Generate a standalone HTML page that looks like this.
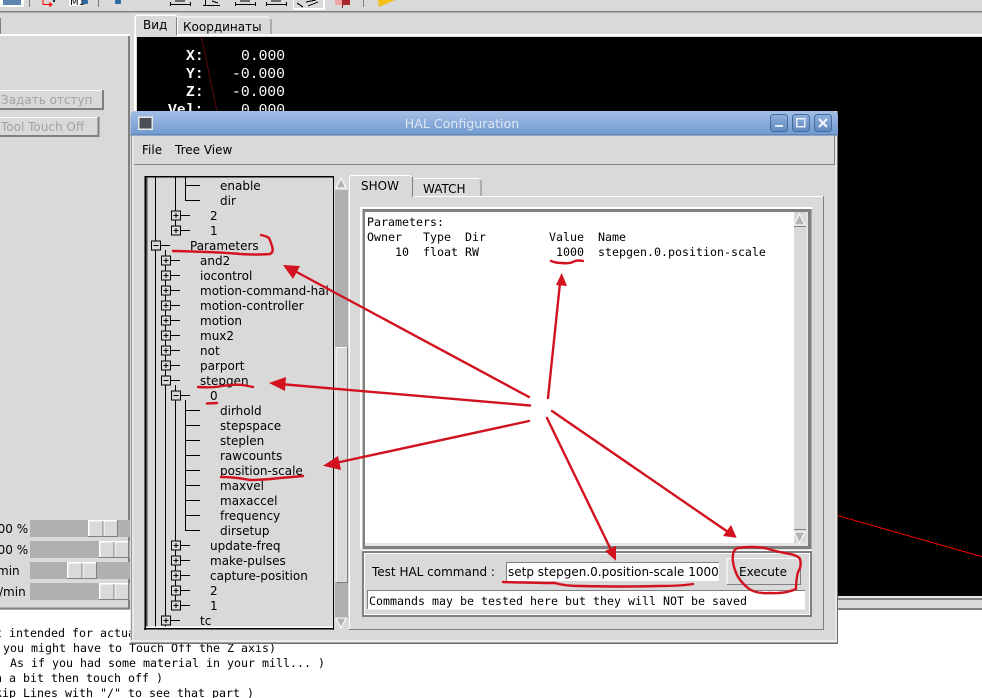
<!DOCTYPE html>
<html><head><meta charset="utf-8"><style>
html,body{margin:0;padding:0;width:982px;height:698px;overflow:hidden;background:#fff}
svg{display:block}
text{white-space:pre}
.u{font-family:"DejaVu Sans","Liberation Sans",sans-serif;font-size:12px;fill:#000}
.m{font-family:"DejaVu Sans Mono","Liberation Mono",monospace;font-size:11.63px;fill:#000}
.d{font-family:"Liberation Mono",monospace;font-size:14.7px;fill:#fff}
.r{fill:none;stroke:#d2121f;stroke-width:2.4;stroke-linecap:round;stroke-linejoin:round}
.h{fill:#d2121f}
.t{stroke:#000;stroke-width:1;fill:none}
</style></head><body>
<svg width="982" height="698" viewBox="0 0 982 698" xmlns="http://www.w3.org/2000/svg" shape-rendering="crispEdges">
<defs>
<g id="p"><rect x="-4.5" y="-4.5" width="9" height="9" fill="#d9d9d9" stroke="#000"/><path d="M-2.5 0H2.5M0 -2.5V2.5" stroke="#000"/></g>
<g id="n"><rect x="-4.5" y="-4.5" width="9" height="9" fill="#d9d9d9" stroke="#000"/><path d="M-2.5 0H2.5" stroke="#000"/></g>
<g id="th"><rect width="30" height="17" fill="#d9d9d9"/><rect width="1.500" height="17" fill="#fff"/><rect width="30" height="1.500" fill="#fff"/><rect x="29" width="1" height="17" fill="#808080"/><rect y="16" width="30" height="1" fill="#808080"/><rect x="14.500" y="1" width="1" height="16" fill="#808080"/><rect x="15.500" y="1" width="1" height="15" fill="#fff"/></g>
</defs>
<!-- app background -->
<rect width="982" height="610" fill="#d9d9d9"/>
<rect y="11" width="982" height="1.4" fill="#808080"/>
<!-- toolbar remnants -->
<rect x="0" y="0" width="24" height="7" fill="#fff"/><rect x="3" y="0" width="18" height="5" fill="#5e86b0"/>
<rect x="29" y="0" width="1" height="7" fill="#808080"/><rect x="98" y="0" width="1" height="7" fill="#808080"/>
<path d="M43 0V4.500H51M49 2.500L52 4.500L49 6.500" stroke="#f00" fill="none"/><rect x="53" y="0" width="2" height="2" fill="#222"/>
<rect x="69" y="0" width="15" height="6" fill="#fff"/><text x="70" y="5" class="u" style="font-size:10px">M1</text><rect x="82" y="0" width="6" height="4" rx="1.500" fill="#2a6a9e"/><rect x="115" y="0" width="6" height="4" rx="1.500" fill="#2a6a9e"/>
<path d="M170.500 2V6M190.500 2V6M170 4.500H190M175 1H185" stroke="#000" fill="none"/>
<path d="M203 5.500H220M205.500 0V5M212 1L218 3" stroke="#000" fill="none"/>
<path d="M235.500 2V6M255.500 2V6M235 4.500H255M240 1H250" stroke="#000" fill="none"/>
<path d="M266.500 2V6M286.500 2V6M266 4.500H286M271 1H281" stroke="#000" fill="none"/>
<rect x="293" y="0" width="32" height="10" fill="#fff"/><rect x="294" y="0" width="29" height="8" fill="#d9d9d9"/><path d="M297 3L303 7M308 6L318 2M306 2L316 0" stroke="#000" fill="none"/>
<rect x="335" y="0" width="15" height="5" fill="#a82a2e"/><rect x="335" y="0" width="7" height="5" fill="#eda6a0"/><rect x="342" y="5" width="1" height="3" fill="#7a1a1a"/>
<rect x="363" y="0" width="1" height="7" fill="#808080"/>
<path d="M378 0H395L386 4L379 7Z" fill="#f2c11a"/>
<!-- left panel -->
<rect y="18" width="1" height="16" fill="#808080"/>
<rect y="34" width="130" height="2" fill="#fff"/>
<rect x="128" y="36" width="2" height="573" fill="#808080"/>
<rect y="607.500" width="130" height="2" fill="#808080"/>
<rect x="-2" y="90" width="106" height="19" fill="#d9d9d9"/><path d="M0 90.500H103" stroke="#fff"/><path d="M103 90V109H0" stroke="#808080" fill="none" stroke-width="2"/>
<text x="1" y="104" class="u" style="fill:#a3a3a3">Задать отступ</text>
<rect x="-2" y="117" width="101" height="19" fill="#d9d9d9"/><path d="M0 117.500H98" stroke="#fff"/><path d="M98.500 117V136H0" stroke="#808080" fill="none" stroke-width="2"/>
<text x="1" y="131" class="u" style="fill:#a3a3a3">Tool Touch Off</text>
<text x="-10" y="533" class="u">100 %</text><text x="-10" y="554" class="u">100 %</text><text x="-3" y="575" class="u">min</text><text x="-1" y="596" class="u">/min</text>
<rect x="30" y="520" width="100" height="17" fill="#b0b0b0"/><rect x="30" y="541" width="100" height="17" fill="#b0b0b0"/><rect x="30" y="562" width="100" height="17" fill="#b0b0b0"/><rect x="30" y="583" width="100" height="17" fill="#b0b0b0"/>
<use href="#th" x="88" y="520"/><use href="#th" x="99" y="541"/><use href="#th" x="67" y="562"/><use href="#th" x="99" y="583"/>
<!-- tabs -->
<path d="M135 34V17L137 15H175L177 17V34" fill="#d9d9d9" stroke="#fff" stroke-width="1.500"/><path d="M176.500 17V35" stroke="#808080"/>
<path d="M178 34V17H269L271 19V34" fill="#d9d9d9"/><path d="M178 17H269" stroke="#fff"/><path d="M271 19V34" stroke="#808080"/>
<text x="143" y="29" class="u">Вид</text><text x="183" y="31" class="u">Координаты</text>
<rect x="177" y="34" width="805" height="2" fill="#fff"/><rect x="134" y="34" width="2" height="580" fill="#fff"/>
<!-- canvas -->
<rect x="137" y="37" width="845" height="559" fill="#000"/>
<path d="M201.500 37L217 112" stroke="#5a0808" fill="none" shape-rendering="geometricPrecision"/>
<path d="M838 515.700L982 556.700" stroke="#f00" fill="none" shape-rendering="geometricPrecision"/>
<text x="186" y="60" class="d" style="font-weight:bold">X:</text><text x="186" y="78" class="d" style="font-weight:bold">Y:</text><text x="186" y="96" class="d" style="font-weight:bold">Z:</text><text x="168" y="114" class="d" style="font-weight:bold">Vel:</text>
<text x="241" y="60" class="d">0.000</text><text x="232" y="78" class="d">-0.000</text><text x="232" y="96" class="d">-0.000</text><text x="241" y="114" class="d">0.000</text>
<rect x="838" y="596" width="144" height="2" fill="#e6e6e6"/><rect x="838" y="598" width="144" height="2" fill="#808080"/><rect x="838" y="600" width="144" height="8" fill="#d9d9d9"/><rect x="838" y="608" width="144" height="2" fill="#808080"/>
<!-- bottom text -->
<rect y="610" width="982" height="88" fill="#fff"/>
<text x="-5" y="637" class="m">t intended for actual</text>
<text x="3" y="652" class="m">you might have to Touch Off the Z axis)</text>
<text x="10" y="667" class="m">As if you had some material in your mill... )</text>
<text x="-5" y="682" class="m">n a bit then touch off )</text>
<text x="-5" y="697" class="m">kip Lines with "/" to see that part )</text>
<!-- window -->
<rect x="130.500" y="111" width="707" height="532.500" fill="#d9d9d9"/>
<rect x="131" y="135" width="1" height="508" fill="#9a9a9a"/><rect x="132" y="135" width="2" height="508" fill="#e6e6e6"/>
<rect x="835" y="135" width="2" height="508" fill="#e6e6e6"/><rect x="837" y="135" width="1" height="509" fill="#6e6e6e"/>
<rect x="131" y="640" width="706" height="2" fill="#ececec"/><rect x="130.500" y="642.500" width="707.500" height="1.500" fill="#6e6e6e"/>
<linearGradient id="tb" x1="0" y1="0" x2="0" y2="1"><stop offset="0" stop-color="#a3bfe6"/><stop offset="1" stop-color="#7099cf"/></linearGradient>
<linearGradient id="bb" x1="0" y1="0" x2="0" y2="1"><stop offset="0" stop-color="#8fb0dc"/><stop offset="1" stop-color="#5f89c2"/></linearGradient>
<path d="M130.500 135V116Q130.500 111 135.500 111H833Q838 111 838 116V135Z" fill="url(#tb)" shape-rendering="geometricPrecision"/>
<rect x="130.500" y="134.300" width="707.500" height="1" fill="#4f76ab"/>
<rect x="138.500" y="117" width="13.500" height="12" fill="#4a4f55" stroke="#e8e8e8" stroke-width="1.500"/>
<text x="462" y="128" class="u" text-anchor="middle" style="fill:#dfe7f2;font-size:12.6px">HAL Configuration</text>
<g shape-rendering="geometricPrecision">
<rect x="770.500" y="114.500" width="17" height="17" rx="3" fill="url(#bb)" stroke="#466b9e"/>
<rect x="792.500" y="114.500" width="17" height="17" rx="3" fill="url(#bb)" stroke="#466b9e"/>
<rect x="814.500" y="114.500" width="17" height="17" rx="3" fill="url(#bb)" stroke="#466b9e"/>
</g>
<rect x="775" y="125" width="8" height="2" fill="#e8eef8"/>
<rect x="796.500" y="118.500" width="8" height="8" fill="none" stroke="#e8eef8" stroke-width="1.500"/>
<path d="M819 119L827 127M827 119L819 127" stroke="#f0f4fa" stroke-width="2.200" shape-rendering="geometricPrecision"/>
<!-- menu -->
<path d="M134 164.500H834.500V135" stroke="#808080" fill="none"/>
<text x="142" y="154" class="u">File</text><text x="175" y="154" class="u">Tree View</text>
<!-- tree frame -->
<svg x="146" y="177" width="187" height="451" viewBox="146 177 187 451">
<rect x="146" y="177" width="187" height="451" fill="#d9d9d9"/>
<g class="t">
<path d="M155.500 177V628M175.500 177V230M185.500 177V200M185 185.500H200M185 200.500H200M175 215.500H190M175 230.500H190"/>
<path d="M155 245.500H170M165.500 250V628"/>
<path d="M165 260.500H180M165 275.500H180M165 290.500H180M165 305.500H180M165 320.500H180M165 335.500H180M165 350.500H180M165 365.500H180M165 380.500H180M165 620.500H180"/>
<path d="M175 395.500H190M175.500 385V605M185.500 400V530"/>
<path d="M185 410.500H200M185 425.500H200M185 440.500H200M185 455.500H200M185 470.500H200M185 485.500H200M185 500.500H200M185 515.500H200M185 530.500H200"/>
<path d="M175 545.500H190M175 560.500H190M175 575.500H190M175 590.500H190M175 605.500H190"/>
</g>
<use href="#p" x="176" y="215.500"/><use href="#p" x="176" y="230.500"/><use href="#n" x="156" y="245.500"/>
<use href="#p" x="166" y="260.500"/><use href="#p" x="166" y="275.500"/><use href="#p" x="166" y="290.500"/><use href="#p" x="166" y="305.500"/><use href="#p" x="166" y="320.500"/><use href="#p" x="166" y="335.500"/><use href="#p" x="166" y="350.500"/><use href="#p" x="166" y="365.500"/><use href="#n" x="166" y="380.500"/><use href="#n" x="176" y="395.500"/>
<use href="#p" x="176" y="545.500"/><use href="#p" x="176" y="560.500"/><use href="#p" x="176" y="575.500"/><use href="#p" x="176" y="590.500"/><use href="#p" x="176" y="605.500"/><use href="#p" x="166" y="620.500"/>
<g class="u">
<text x="220" y="190">enable</text><text x="220" y="205">dir</text><text x="210" y="220">2</text><text x="210" y="235">1</text>
<text x="190" y="250">Parameters</text><text x="200" y="265">and2</text><text x="200" y="280">iocontrol</text><text x="200" y="295">motion-command-hal</text><text x="200" y="310">motion-controller</text><text x="200" y="325">motion</text><text x="200" y="340">mux2</text><text x="200" y="355">not</text><text x="200" y="370">parport</text><text x="200" y="385">stepgen</text>
<text x="210" y="400">0</text>
<text x="220" y="415">dirhold</text><text x="220" y="430">stepspace</text><text x="220" y="445">steplen</text><text x="220" y="460">rawcounts</text><text x="220" y="475">position-scale</text><text x="220" y="490">maxvel</text><text x="220" y="505">maxaccel</text><text x="220" y="520">frequency</text><text x="220" y="535">dirsetup</text>
<text x="210" y="550">update-freq</text><text x="210" y="565">make-pulses</text><text x="210" y="580">capture-position</text><text x="210" y="595">2</text><text x="210" y="610">1</text>
<text x="200" y="625">tc</text>
</g>
</svg>
<path d="M145 630V176.500H333" stroke="#000" fill="none" stroke-width="1.500"/><rect x="146" y="177" width="1.500" height="451" fill="#444"/>
<rect x="333" y="176" width="1" height="454" fill="#000"/><rect x="144" y="628" width="190" height="1.500" fill="#000"/><rect x="146" y="626.500" width="187" height="1.500" fill="#fff"/>
<!-- tree scrollbar -->
<rect x="335" y="176" width="13" height="454" fill="#d9d9d9"/>
<rect x="335" y="190" width="13" height="428" fill="#b0b0b0"/>
<rect x="336" y="347.500" width="11" height="235" fill="#d9d9d9"/><path d="M336 582V347.500H347" stroke="#fff" fill="none"/><path d="M347.500 347V582.500H336" stroke="#808080" fill="none"/>
<path d="M341 178L346 188H336Z" fill="#b5b5b5" stroke="#fff" shape-rendering="geometricPrecision"/>
<path d="M341 628L346 618H336Z" fill="#b5b5b5" stroke="#fff" shape-rendering="geometricPrecision"/>
<!-- notebook -->
<path d="M349.500 630V196.500H824" stroke="#fff" fill="none"/><path d="M823.500 196V629.500H349" stroke="#808080" fill="none"/>
<path d="M349 196V177L351 175H410L412 177V197" fill="#d9d9d9"/><path d="M349.500 196V177L351 175.500H410L411.500 177" stroke="#fff" fill="none"/><path d="M412.500 177V197" stroke="#808080"/>
<path d="M413.500 196V178.500H479L481 180V196" fill="#d9d9d9"/><path d="M414 178.500H479" stroke="#fff"/><path d="M481 180V196" stroke="#808080"/>
<rect x="350" y="196" width="62" height="1.500" fill="#d9d9d9"/>
<text x="361" y="190" class="u">SHOW</text><text x="423" y="193" class="u">WATCH</text>
<!-- text frame -->
<rect x="360" y="207" width="452" height="2" fill="#fff"/><rect x="360" y="207" width="2.500" height="342" fill="#fff"/>
<rect x="362.500" y="209" width="449" height="340" fill="#808080"/>
<rect x="365" y="212" width="443" height="334" fill="#e4e4e4"/>
<rect x="365" y="212" width="428" height="331" fill="#fff"/>
<rect x="793" y="212" width="13" height="331" fill="#d9d9d9"/><path d="M793.500 212V543" stroke="#fff"/>
<path d="M799.500 214L805 225H794Z" fill="#b5b5b5" stroke="#fff" shape-rendering="geometricPrecision"/><path d="M794 226.500H806" stroke="#808080"/>
<path d="M794 529.500H806" stroke="#808080"/><path d="M799.500 543L805 532H794Z" fill="#b5b5b5" stroke="#fff" shape-rendering="geometricPrecision"/>
<g class="m"><text x="367" y="226">Parameters:</text>
<text x="367" y="241">Owner   Type  Dir         Value  Name</text>
<text x="367" y="256">    10  float RW           1000  stepgen.0.position-scale</text></g>
<!-- command section -->
<rect x="362" y="550" width="450" height="67" fill="#808080"/>
<rect x="362" y="550" width="450" height="1" fill="#fff"/>
<rect x="364" y="553" width="446" height="62" fill="#fff"/>
<rect x="365" y="554" width="444" height="60" fill="#d9d9d9"/>
<text x="372" y="576" class="u">Test HAL command :</text>
<rect x="506" y="562" width="213" height="19" fill="#fff"/><path d="M506.500 581V562.500H719" stroke="#808080" fill="none"/>
<svg x="507" y="563" width="212" height="18" viewBox="507 563 212 18"><text x="508" y="576" class="u">setp stepgen.0.position-scale 1000</text></svg>
<rect x="726.500" y="558.500" width="74" height="26" fill="#d9d9d9"/><path d="M727 584V558.500H800" stroke="#fff" fill="none"/><path d="M800.500 558V584.500H727" stroke="#808080" fill="none"/>
<text x="739" y="576" class="u">Execute</text>
<rect x="367" y="590.500" width="438" height="19" fill="#fff"/><path d="M367.500 609V590.500H805" stroke="#808080" fill="none"/>
<text x="369" y="605" class="m">Commands may be tested here but they will NOT be saved</text>
<!-- red annotations -->
<g shape-rendering="geometricPrecision">
<path class="r" d="M529 397L291 269"/><path class="h" d="M283 265L300 266L293 279Z"/>
<path class="r" d="M530 405.500L280 384"/><path class="h" d="M269 383L286 377L285 391Z"/>
<path class="r" d="M529 421L333 463.500"/><path class="h" d="M323 465.700L338 456L341 470Z"/>
<path class="r" d="M548 398L560 283"/><path class="h" d="M561.700 273L567 286L556 285Z"/>
<path class="r" d="M547 418L612 552"/><path class="h" d="M616 560.700L605 551L616 546Z"/>
<path class="r" d="M552 411L728 532"/><path class="h" d="M736.700 537.700L723 536L731 525Z"/>
<path class="r" d="M173 251Q220 252 240 254Q258 255 270 254Q274 252 272 246Q270 240 269 238Q266 236 261 235"/>
<path class="r" d="M198 387Q212 388 222 386Q235 384 243 385Q248 386 253 387"/>
<path class="r" d="M207 403.500L217 403"/>
<path class="r" d="M221 477Q235 477 250 480Q265 480 280 478Q292 477 303 476"/>
<path class="r" d="M551 261Q556 263 562 263Q570 264 575 261Q579 260 583 261"/>
<path class="r" d="M503 582Q540 583 555 583Q565 586 580 586Q630 587 660 586Q680 586 693 584"/>
<path class="r" d="M738 548Q750 546 765 548Q778 552 785 553Q798 555 800 559Q802 566 798 572Q796 580 796 589Q785 594 770 593Q755 594 748 588Q738 580 735 570Q731 558 734 551Q735 549 738 548"/>
</g>
</svg>
</body></html>
